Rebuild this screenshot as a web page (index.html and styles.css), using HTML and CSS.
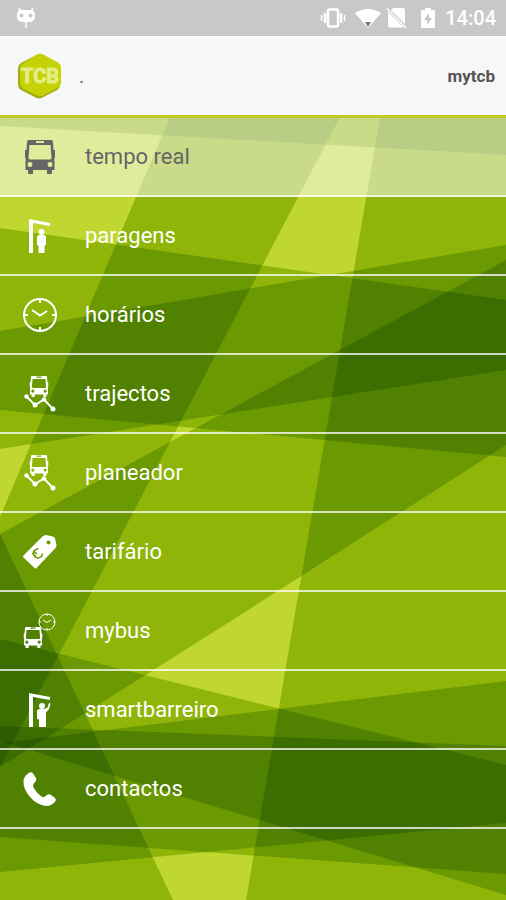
FILE: index.html
```html
<!DOCTYPE html>
<html lang="pt">
<head>
<meta charset="utf-8">
<meta name="viewport" content="width=device-width, initial-scale=1">
<title>TCB</title>
<link rel="stylesheet" href="styles.css">
</head>
<body>
<div class="status">
  <svg class="status-cid" viewBox="0 0 20 22" aria-hidden="true">
    <path class="thin" d="M3 1 5 4M17 1 15 4M10 14V21"/>
    <path class="solid" fill-rule="evenodd" d="M5 3h10q4 0 4 5v1q0 6-6 6H7q-6 0-6-6V8q0-5 4-5zM5.500 6.500a2 2 0 1 0 .01 0zM14.500 6.500a2 2 0 1 0 .01 0z"/>
  </svg>
  <div class="status-icons">
    <svg class="vibrate" viewBox="0 0 26 20" aria-hidden="true">
      <rect class="outline" x="8" y="1.500" width="10" height="17" rx="1.500"/>
      <path class="outline" d="M5 5v10M21 5v10"/><path class="thin" d="M1.500 7v6M24.500 7v6"/>
    </svg>
    <svg class="wifi" viewBox="0 0 28 20" aria-hidden="true">
      <path class="solid" d="M1 5Q14-3 27 5L14 20Z"/><path class="signal" d="M11 14h6l-3 5z"/>
    </svg>
    <svg class="nosim" viewBox="0 0 22 22" aria-hidden="true">
      <path class="solid" d="M7 1h10q2 0 2 2v14L5 3zM2 4.500 17.500 20.500H4q-2 0-2-2z"/>
      <path class="thin" d="M1 1.500 20 21"/>
    </svg>
    <svg class="battery" viewBox="0 0 14 20" aria-hidden="true">
      <path class="solid" fill-rule="evenodd" d="M4 0h6v2h3q1 0 1 1v16q0 1-1 1H1q-1 0-1-1V3q0-1 1-1h3zM8 5l-5 7h3v5l5-7H8z"/>
    </svg>
    <time class="clock">14:04</time>
  </div>
</div>

<header class="header">
  <svg class="logo" viewBox="0 0 44 46" role="img" aria-label="TCB">
    <path class="logo-shade" d="M18.500 2Q22 0 25.500 2L39 10q3 2 3 5v17q0 3-3 5L24.500 44.500q-3.500 2-7 0L3 37q-3-2-3-5V15q0-3 3-5z"/>
    <path class="logo-face" d="M19 1.500Q22 0 25 1.500L40 9.500q3 2 3 5v15q0 3-3 5L25 42.500q-3 1.500-6 0L5 35.500q-3-2-3-5v-15q0-3 3-5z"/>
    <text class="logo-text" x="22" y="30" text-anchor="middle">TCB</text>
  </svg>
  <h1 class="title">.</h1>
  <a class="account" href="#mytcb">mytcb</a>
</header>

<main class="main">
  <svg class="backdrop" viewBox="0 118 506 782" preserveAspectRatio="none" aria-hidden="true">
    <rect class="base" y="117" width="506" height="783"/>
    <path class="band" d="M170 117 0 517V767L340 117Z"/>
    <path class="band" d="M380 117 246 900H506V117Z"/>
    <path class="band" d="M0 117V126L506 155V117Z"/>
    <path class="band" d="M0 228 506 300V457L0 410Z"/>
    <path class="band" d="M0 331 506 245V370L0 449Z"/>
    <path class="band" d="M0 534 506 260V445L253 607 0 767Z"/>
    <path class="band" d="M0 534 173 900H0Z"/>
    <path class="band" d="M0 639 506 765V895L0 741Z"/>
    <path class="band" d="M0 743 506 681V823L0 872Z"/>
    <path class="band" d="M0 726 506 746V874L0 837Z"/>
  </svg>

  <svg class="sprites" aria-hidden="true">
    <symbol id="bus" viewBox="0 0 30 34">
      <path fill-rule="evenodd" d="M4 0h22q2 0 2 2l1.500 19v9H27v3q0 1-1 1h-3q-1 0-1-1v-3H8v3q0 1-1 1H4q-1 0-1-1v-3H.500v-9L2 2Q2 0 4 0zM11 1v2h8V1zM4.500 5 3.500 18q0 1.500 2 1.500h19q2 0 2-1.500l-1-13zM5 22a2.500 2.500 0 1 0 .01 0zM25 22a2.500 2.500 0 1 0 .01 0z"/>
      <path d="M0 10h2v8H0zM28 10h2v8h-2z"/>
    </symbol>
    <symbol id="shelter" viewBox="0 0 36 36">
      <path d="M7 1 28 5v3L11 5v30H7z"/>
    </symbol>
    <symbol id="clock" viewBox="0 0 36 36">
      <circle class="line" cx="18" cy="18" r="16"/>
      <path class="line" d="M18 2v4M18 30v4M2 18h4M30 18h4"/>
      <path class="line" d="M10 13 18 18.500 25 14"/>
    </symbol>
    <symbol id="route" viewBox="0 0 36 36">
      <use href="#bus" x="7" y="0" width="20" height="21"/>
      <path class="line" d="M5 21 13 29 22 23.500 31 33"/>
      <circle cx="4.500" cy="20.500" r="2.200"/><circle cx="13" cy="29" r="2.500"/><circle cx="22" cy="23.500" r="2.200"/><circle cx="31" cy="33" r="2.500"/>
    </symbol>
  </svg>

  <nav>
    <ul class="menu">
      <li><a class="item active" href="#tempo-real"><svg class="icon" viewBox="0 0 36 36" aria-hidden="true"><use href="#bus" x="3" y="1" width="30" height="34"/></svg>tempo real</a></li>
      <li><a class="item" href="#paragens"><svg class="icon" viewBox="0 0 36 36" aria-hidden="true"><use href="#shelter"/><circle cx="19.500" cy="14" r="3"/><path d="M17.500 17h4q2.500 0 2.500 2.500v7.500l-1.500.500V35h-6v-7.500L15 27v-7.500q0-2.500 2.500-2.500z"/></svg>paragens</a></li>
      <li><a class="item" href="#horarios"><svg class="icon" viewBox="0 0 36 36" aria-hidden="true"><use href="#clock"/></svg>horários</a></li>
      <li><a class="item" href="#trajectos"><svg class="icon" viewBox="0 0 36 36" aria-hidden="true"><use href="#route"/></svg>trajectos</a></li>
      <li><a class="item" href="#planeador"><svg class="icon" viewBox="0 0 36 36" aria-hidden="true"><use href="#route"/></svg>planeador</a></li>
      <li><a class="item" href="#tarifario"><svg class="icon" viewBox="0 0 36 36" aria-hidden="true"><path fill-rule="evenodd" d="M20.500 2.500Q22 1 24 1L31 2.500q1.500.500 2 2L34.500 11q0 2-1 3L14.500 34q-1 1-2 0L1.500 23.500q-1-1 0-2zM26.500 6.500a2 2 0 1 0 .01 0z"/><path class="euro" d="M20.500 19.500a4.500 4.500 0 1 1-4-4.500M11 16.500l4 3.500M10 19l4 3.500"/></svg>tarifário</a></li>
      <li><a class="item" href="#mybus"><svg class="icon" viewBox="0 0 36 36" aria-hidden="true"><use href="#bus" x="1" y="14" width="20" height="21"/><circle class="fine" cx="25" cy="9" r="8"/><path class="fine" d="M21 7l4 2.500L29 7M25 1v2M25 15v2M17 9h2M31 9h2"/></svg>mybus</a></li>
      <li><a class="item" href="#smartbarreiro"><svg class="icon" viewBox="0 0 36 36" aria-hidden="true"><use href="#shelter"/><circle cx="20" cy="14" r="3"/><path d="M17.500 17h5l3-1.500 1.500-4.500 1.500.500-1.500 5.500-3 3.500V35h-7v-7.500L15 27v-7.500q0-2.500 2.500-2.500z"/></svg>smartbarreiro</a></li>
      <li><a class="item" href="#contactos"><svg class="icon" viewBox="0 0 36 36" aria-hidden="true"><path d="M6 2.500Q9 0 11 2.500L14 7q1 2-.500 3.500L11.500 13q-1 1.500 0 3.500 3 5.500 8 9 2 1 3.500 0l2-1.500q2-1.500 4 0l4 3q1.500 1.500.500 3Q30 35 24 35 15 34 8 26 1 18 1.500 10 2 5 6 2.500z"/></svg>contactos</a></li>
    </ul>
  </nav>
</main>
</body>
</html>
```
FILE: styles.css
```css
* {
  box-sizing: border-box;
}

body {
  margin: 0;
  min-height: 100vh;
  display: flex;
  flex-direction: column;
  font-family: Roboto, "Liberation Sans", sans-serif;
}

.status {
  height: 36px;
  padding: 0 10px 0 16px;
  display: flex;
  align-items: center;
  justify-content: space-between;
  background: #c8c8c8;
  color: #fff;
}

.status-icons {
  display: flex;
  align-items: center;
}

.status-cid {
  width: 20px;
  height: 22px;
}

.vibrate {
  width: 26px;
  height: 20px;
  margin-right: 8px;
}

.wifi {
  width: 28px;
  height: 20px;
  margin-right: 4px;
}

.nosim {
  width: 22px;
  height: 22px;
  margin-right: 13px;
}

.battery {
  width: 14px;
  height: 20px;
  margin-right: 10px;
}

.clock {
  font-size: 20px;
  font-weight: 500;
  line-height: 24px;
}

.solid {
  fill: #fff;
}

.signal {
  fill: #777;
}

.outline,
.thin {
  fill: none;
  stroke: #fff;
  stroke-width: 2.5;
}

.thin {
  stroke-width: 1.5;
}

.header {
  height: 82px;
  padding: 0 11px 0 18px;
  display: flex;
  align-items: center;
  border-top: 1px solid #fff;
  border-bottom: 3px solid #c1cb21;
  background: #f7f7f7;
}

.logo {
  width: 44px;
  height: 46px;
}

.logo-shade {
  fill: #a3ad12;
}

.logo-face {
  fill: #c4d206;
}

.logo-text {
  fill: #e4ec85;
  stroke: #e4ec85;
  stroke-width: 1;
  font-size: 20px;
  font-weight: 700;
}

.title {
  flex: 1;
  margin: 0 0 0 17px;
  color: #777;
  font-size: 20px;
  font-weight: 400;
}

.account {
  color: #555;
  font-size: 17px;
  font-weight: 700;
  text-decoration: none;
}

.main {
  flex: 1;
  position: relative;
}

.backdrop {
  position: absolute;
  width: 100%;
  height: 100%;
  isolation: isolate;
}

.base,
.band {
  fill: #bfd730;
}

/* Each overlapping band darkens the green by one step. */
.band {
  mix-blend-mode: multiply;
}

.sprites {
  position: absolute;
  width: 0;
  height: 0;
}

.menu {
  position: relative;
  margin: 0;
  padding: 0;
  list-style: none;
}

.item {
  height: 79px;
  padding-left: 22px;
  display: flex;
  align-items: center;
  gap: 27px;
  border-bottom: 2px solid rgba(255, 255, 255, 0.75);
  color: #fff;
  font-size: 22px;
  line-height: 28px;
  text-decoration: none;
}

.active {
  background: rgba(255, 255, 255, 0.52);
  color: #666;
}

.icon {
  width: 36px;
  height: 36px;
  fill: currentColor;
}

.line,
.fine {
  fill: none;
  stroke: currentColor;
  stroke-width: 2;
}

.fine {
  stroke-width: 1;
}

.euro {
  fill: none;
  stroke: #6b9a04;
  stroke-width: 1.5;
}
```
